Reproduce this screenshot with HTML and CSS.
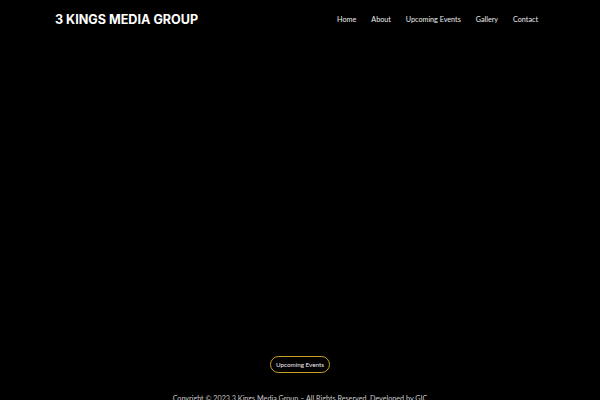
FILE: index.html
```html
<!DOCTYPE html>
<html lang="en">
<head>
<meta charset="utf-8">
<title>3 Kings Media Group</title>
<link rel="stylesheet" href="styles.css">
</head>
<body>
<div class="page">
  <header class="site-header">
    <a class="logo" href="#">3 KINGS MEDIA GROUP</a>
    <nav class="nav">
      <a href="#">Home</a>
      <a href="#">About</a>
      <a href="#">Upcoming Events</a>
      <a href="#">Gallery</a>
      <a href="#">Contact</a>
    </nav>
  </header>
  <main class="hero">
    <a class="btn" href="#">Upcoming Events</a>
  </main>
  <footer class="footer">Copyright © 2023 3 Kings Media Group – All Rights Reserved. Developed by GIC</footer>
</div>
</body>
</html>
```

FILE: styles.css
```css
html, body {
  margin: 0;
  padding: 0;
  background: #000;
  color: #fff;
  height: 100%;
}
body {
  font-family: "Lato", "Liberation Sans", sans-serif;
  overflow: hidden;
}
a { text-decoration: none; color: inherit; }
.page {
  display: flex;
  flex-direction: column;
  height: 400px;
}
.site-header {
  display: flex;
  align-items: center;
  justify-content: space-between;
  padding: 0 62px 0 55px;
  height: 38px;
}
.logo {
  font-family: "Inter", "Liberation Sans", sans-serif;
  font-weight: 700;
  font-size: 12.6px;
  color: #fff;
}
.nav {
  display: flex;
  gap: 15px;
  font-size: 7.2px;
  color: #eee;
}
.hero {
  flex: 1;
  display: flex;
  flex-direction: column;
  justify-content: flex-end;
  align-items: center;
  padding-bottom: 19px;
}
.btn {
  border: 1.5px solid #c9a227;
  border-radius: 10px;
  padding: 4px 5px;
  font-size: 6.3px;
  color: #eee;
}
.footer {
  text-align: center;
  font-size: 7.2px;
  color: #ccc;
  height: 8px;
  line-height: 14px;
}
```
